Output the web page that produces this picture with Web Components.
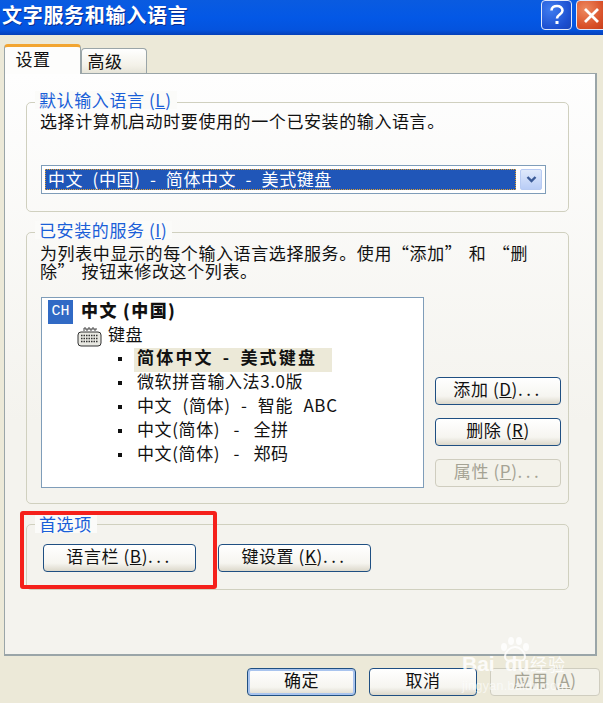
<!DOCTYPE html>
<html lang="zh">
<head>
<meta charset="utf-8">
<title>文字服务和输入语言</title>
<style>
  html, body { margin: 0; padding: 0; }
  body {
    inline-size: 603px;
    block-size: 703px;
    overflow: hidden;
    font: 17px/18px "Noto Sans CJK SC", "Liberation Sans", sans-serif;
    letter-spacing: .6px;
    color: #111;
    background: #ece9d8;
  }
  .dots { letter-spacing: 3.500px; }
</style>
</head>
<body>
<xp-dialog heading="文字服务和输入语言">
  <xp-tabs>
    <xp-group style="--h:110px; margin-block-start:28px">
      <span slot="label">默认输入语言 (<u>L</u>)</span>
      <p style="margin:1px 0 0 13px; white-space:nowrap">选择计算机启动时要使用的一个已安装的输入语言。</p>
      <xp-select value="中文 (中国) - 简体中文 - 美式键盘" style="margin:35px 0 0 14px"></xp-select>
    </xp-group>
    <xp-group style="--h:272px; margin-block-start:20px">
      <span slot="label">已安装的服务 (<u>I</u>)</span>
      <p style="margin:3px 0 0 13px; white-space:nowrap; word-spacing:2px">为列表中显示的每个输入语言选择服务。使用“添加” 和 “删<br>除” 按钮来修改这个列表。</p>
      <div style="display:flex; margin:17px 0 0 14px; gap:11px">
        <lang-tree></lang-tree>
        <div style="display:flex; flex-direction:column; gap:13px; margin-block-start:80px; inline-size:126px; flex:none">
          <xp-button>添加 (<u>D</u>)<span class="dots">...</span></xp-button>
          <xp-button>删除 (<u>R</u>)</xp-button>
          <xp-button disabled>属性 (<u>P</u>)<span class="dots">...</span></xp-button>
        </div>
      </div>
    </xp-group>
    <xp-group style="--h:66px; --lt:-10px; margin-block-start:20px">
      <span slot="label">首选项</span>
      <div style="display:flex; gap:22px; margin:11px 0 0 16px">
        <xp-button style="inline-size:153px">语言栏 (<u>B</u>)<span class="dots">...</span></xp-button>
        <xp-button style="inline-size:153px">键设置 (<u>K</u>)<span class="dots">...</span></xp-button>
      </div>
    </xp-group>
  </xp-tabs>
  <div slot="footer" style="display:flex; gap:13px; padding-inline-start:247px">
    <xp-button primary style="inline-size:109px">确定</xp-button>
    <xp-button style="inline-size:108px">取消</xp-button>
    <xp-button disabled style="inline-size:110px">应用 (<u>A</u>)</xp-button>
  </div>
</xp-dialog>

<script>
class XpDialog extends HTMLElement {
  constructor() {
    super();
    this.attachShadow({ mode: "open" }).innerHTML = `
      <style>
        :host { display: block; position: relative; block-size: 703px; }
        .bar {
          display: flex; align-items: flex-start; block-size: 35px; box-sizing: border-box;
          background: linear-gradient(#0a5be0 0, #0358e6 50%, #0453de 85%, #0640b8 100%);
        }
        h1 {
          flex: 1; margin: 3px 0 0 2px; font: bold 20px/24px "Noto Sans CJK SC", sans-serif;
          letter-spacing: .7px; color: #fff; text-shadow: 1px 1px 0 #0a2f90;
        }
        .cap {
          inline-size: 31px; block-size: 30px; box-sizing: border-box; border: 1px solid #dfe8fb;
          border-radius: 4px; margin-inline-start: 4px; flex: none;
          display: flex; align-items: center; justify-content: center;
        }
        .help { background: radial-gradient(circle at 30% 30%, #3f7df0, #1c4fd0 70%, #1a45b8); }
        .close { background: radial-gradient(circle at 30% 30%, #ee8a60, #d9522a 60%, #c53a18); margin-inline-end: -4px; }
        .body { padding: 9px 6px 0 4px; }
        .foot { margin-block-start: 12px; }
        .mark { position: absolute; inset: 0; pointer-events: none; }
        .red {
          position: absolute; left: 20px; top: 511px; inline-size: 197px; block-size: 78px;
          box-sizing: border-box; border: 4px solid #f5201b; border-radius: 3px;
        }
        .wm { position: absolute; left: 462px; top: 654px; color: #fff; opacity: .85; white-space: nowrap; }
        .bai { position: absolute; left: 0; top: 0; font: bold 21px/20px "Liberation Sans", sans-serif; letter-spacing: 0; }
        .du { position: absolute; left: 43px; top: 0; font: bold 20px/20px "Liberation Sans", sans-serif; letter-spacing: 0; }
        .jy { position: absolute; left: 68px; top: 1px; font: 17px/18px "Noto Sans CJK SC", sans-serif; letter-spacing: 1px; }
        .url { position: absolute; left: 0; top: 25px; font: 12.500px/14px "Liberation Sans", sans-serif; letter-spacing: .3px; opacity: .75; }
      </style>
      <div class="bar">
        <h1></h1>
        <div class="cap help">
          <svg width="16" height="22" viewBox="0 0 16 22"><path d="M2.500 6.500C2.500 3.500 5 2 8 2s5.500 1.600 5.500 4.500c0 4-5.500 4-5.500 8" fill="none" stroke="#fff" stroke-width="2.600"/><rect x="6.500" y="17" width="3" height="3" fill="#fff"/></svg>
        </div>
        <div class="cap close">
          <svg width="17" height="17" viewBox="0 0 17 17"><path d="M2 2l13 13M15 2L2 15" stroke="#fff" stroke-width="2.800"/></svg>
        </div>
      </div>
      <div class="body"><slot></slot></div>
      <div class="foot"><slot name="footer"></slot></div>
      <div class="mark">
        <div class="red"></div>
        <div class="wm">
          <svg width="32" height="24" viewBox="0 0 32 24" style="position:absolute;left:37px;top:-17px" fill="#fff">
            <ellipse cx="5" cy="10" rx="3" ry="4"/><ellipse cx="12" cy="4" rx="3" ry="4"/><ellipse cx="20" cy="4" rx="3" ry="4"/><ellipse cx="27" cy="10" rx="3" ry="4"/>
            <path d="M16 10c-5 0-10 5-10 10 0 3 3 4 5 3.500 3-.7 7-.7 10 0 2 .5 5-.5 5-3.500 0-5-5-10-10-10z" fill="none" stroke="#fff" stroke-width="2"/>
          </svg>
          <span class="bai">Bai</span><span class="du">du</span><span class="jy">经验</span>
          <span class="url">jingyan.baidu.com</span>
        </div>
      </div>`;
    this.shadowRoot.querySelector("h1").textContent = this.getAttribute("heading");
  }
}

class XpTabs extends HTMLElement {
  constructor() {
    super();
    this.attachShadow({ mode: "open" }).innerHTML = `
      <style>
        :host { display: block; }
        .strip { display: flex; align-items: flex-end; block-size: 29px; position: relative; z-index: 1; }
        .tab { box-sizing: border-box; display: flex; justify-content: center; align-items: center; color: #111; }
        .on {
          inline-size: 77px; block-size: 30px; margin-block-end: -1px; padding: 0 19px 3px 0;
          background: #fdfdfc; border: 1px solid #9aa5a8; border-block-end: 0;
          border-block-start: 3px solid #f2a531; border-radius: 4px 4px 0 0;
        }
        .off {
          inline-size: 66px; block-size: 25px; padding: 0 18px 1px 0;
          background: linear-gradient(#fff, #f3f1e8 70%, #e6e4d8);
          border: 1px solid #9aa5a8; border-block-end: 0; border-radius: 4px 4px 0 0;
        }
        .panel {
          box-sizing: border-box; block-size: 583px; padding: 0 26px 0 21px;
          border: 1px solid #9aa5a8; border-block-end-width: 2px; border-inline-end-width: 2px;
          background: linear-gradient(#fefefe, #f4f3ee 60%);
        }
      </style>
      <div class="strip">
        <div class="tab on">设置</div>
        <div class="tab off">高级</div>
      </div>
      <div class="panel"><slot></slot></div>`;
  }
}

class XpGroup extends HTMLElement {
  constructor() {
    super();
    this.attachShadow({ mode: "open" }).innerHTML = `
      <style>
        :host { display: block; box-sizing: border-box; block-size: var(--h); position: relative;
          border: 1px solid #d0d0bf; border-radius: 5px; }
        .legend {
          position: absolute; left: 8px; top: var(--lt, -12px); padding: 0 5px 0 4px; background: #fbfbf9;
          color: #1a5fd8; line-height: 18px; white-space: nowrap;
        }
      </style>
      <div class="legend"><slot name="label"></slot></div>
      <div style="padding-block-start:8px"><slot></slot></div>`;
  }
}

class XpSelect extends HTMLElement {
  constructor() {
    super();
    this.attachShadow({ mode: "open" }).innerHTML = `
      <style>
        :host { display: block; inline-size: 505px; block-size: 29px; box-sizing: border-box;
          border: 1px solid #7f9db9; background: #fff; padding: 3px; }
        .row { display: flex; gap: 4px; block-size: 21px; }
        .value {
          flex: 1; background: #2056b8; color: #fff; outline: 1px dotted #e0a030; outline-offset: -1px;
          padding-inline-start: 3px; line-height: 20px; white-space: nowrap; word-spacing: 5px;
        }
        .arrow {
          inline-size: 22px; box-sizing: border-box; border: 1px solid #b8cbf2; border-radius: 2px;
          background: linear-gradient(#dfe9fb, #b9cdf6); display: flex; align-items: center; justify-content: center;
        }
      </style>
      <div class="row">
        <div class="value"></div>
        <div class="arrow"><svg width="11" height="9" viewBox="0 0 11 9"><path d="M1.500 2l4 4 4-4" fill="none" stroke="#3a5a96" stroke-width="2.400"/></svg></div>
      </div>`;
    this.shadowRoot.querySelector(".value").textContent = this.getAttribute("value");
  }
}

class XpButton extends HTMLElement {
  constructor() {
    super();
    this.attachShadow({ mode: "open" }).innerHTML = `
      <style>
        :host {
          display: flex; align-items: center; justify-content: center; box-sizing: border-box;
          block-size: 28px; padding-block-end: 4px; border: 1px solid #1f4f82; border-radius: 4px; color: #111;
          letter-spacing: .6px; white-space: nowrap;
          background: linear-gradient(#fff, #f6f5f0 70%, #dcd8cb);
        }
        :host([primary]) { box-shadow: inset 0 0 0 2px #a9c4ee; }
        :host([disabled]) { border-color: #cfcdbf; background: #f3f2ea; color: #a5a394; }
      </style>
      <span><slot></slot></span>`;
  }
}

class LangTree extends HTMLElement {
  constructor() {
    super();
    this.attachShadow({ mode: "open" }).innerHTML = `
      <style>
        :host { display: block; flex: none; box-sizing: border-box; inline-size: 383px; block-size: 191px;
          background: #fff; border: 1px solid #7f9db9; padding: 1px 0 0 6px; white-space: nowrap; }
        .lang { display: flex; align-items: center; gap: 8px; block-size: 25px; font-weight: bold; letter-spacing: 1.400px; }
        .lang b { position: relative; top: -2px; }
        .ch {
          inline-size: 25px; block-size: 24px; background: #316ac5; color: #fff; text-align: center;
          font: 15px/24px "Liberation Mono", monospace; letter-spacing: 0;
        }
        .kb { display: flex; align-items: center; gap: 6px; block-size: 24px; padding-inline-start: 29px; }
        .kb span { position: relative; top: -2px; }
        ul { list-style: none; margin: 0; padding: 0 0 0 70px; }
        li { box-sizing: border-box; display: flex; align-items: center; block-size: 24px; position: relative; padding: 0 0 6px 19px; word-spacing: 6px; }
        li::before { content: ""; position: absolute; left: 0; top: 9px; inline-size: 4px; block-size: 4px; background: #111; }
        .sel { font-weight: bold; background: #ece9d8; inline-size: 198px; padding-inline-start: 3px; margin-inline-start: 16px; letter-spacing: 2.200px; word-spacing: 3px; }
        .sel::before { left: -16px; }
        .wide { word-spacing: 9px; }
      </style>
      <div class="lang"><span class="ch">CH</span><b>中文 (中国)</b></div>
      <div class="kb">
        <svg width="25" height="21" viewBox="0 0 25 21">
          <path d="M7 5V2h2v2h2V2h2v2h2V2h2v2h2V2" fill="none" stroke="#444" stroke-width="1"/>
          <rect x="1" y="6" width="23" height="14" rx="3" fill="#e8e8e2" stroke="#333"/>
          <path d="M4 9.500h17M4 12.500h17M4 15.500h17" stroke="#333" stroke-width="1.500" stroke-dasharray="1.500 1"/>
        </svg><span>键盘</span></div>
      <ul>
        <li class="sel">简体中文 - 美式键盘</li>
        <li>微软拼音输入法3.0版</li>
        <li>中文 (简体) - 智能 ABC</li>
        <li class="wide">中文(简体) - 全拼</li>
        <li class="wide">中文(简体) - 郑码</li>
      </ul>`;
  }
}

customElements.define("xp-dialog", XpDialog);
customElements.define("xp-tabs", XpTabs);
customElements.define("xp-group", XpGroup);
customElements.define("xp-select", XpSelect);
customElements.define("xp-button", XpButton);
customElements.define("lang-tree", LangTree);
</script>
</body>
</html>
